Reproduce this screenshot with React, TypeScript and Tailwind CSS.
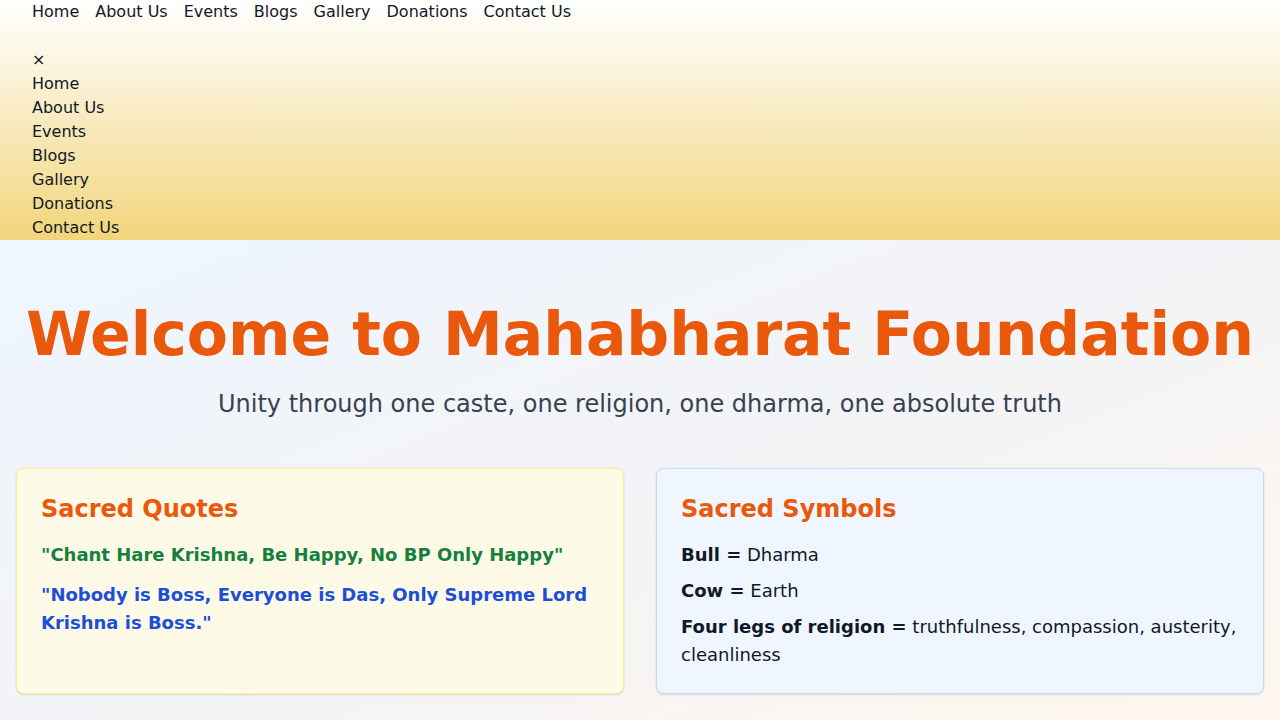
import React from "react";

const links = ["Home", "About Us", "Events", "Blogs", "Gallery", "Donations", "Contact Us"];

export default function App() {
  return (
    <div className="min-h-screen font-['DejaVu_Sans',sans-serif] text-[#111827]">
      {/* Header */}
      <header className="bg-linear-to-b from-white to-[#f2d57a] px-8">
        <nav className="flex gap-4 text-base leading-6">
          {links.map((l) => (
            <a key={l} href="#">
              {l}
            </a>
          ))}
        </nav>
        <div className="h-6" />
        <div className="flex flex-col text-base leading-6">
          <button className="w-fit text-left">×</button>
          {links.map((l) => (
            <a key={l} href="#" className="w-fit">
              {l}
            </a>
          ))}
        </div>
      </header>

      {/* Hero */}
      <main className="bg-linear-to-br from-[#eff6ff] via-[#f3f4f6] to-[#fff7ed] px-4 pt-16 pb-16">
        <h1 className="mb-6 text-center text-6xl leading-none font-bold text-[#ea580c]">
          Welcome to Mahabharat Foundation
        </h1>
        <p className="mb-12 text-center text-2xl leading-8 text-[#374151]">
          Unity through one caste, one religion, one dharma, one absolute truth
        </p>

        <div className="grid grid-cols-2 gap-8">
          <div className="rounded-lg border border-[#fef08a] bg-[#fefae8] p-6 shadow-sm">
            <h2 className="mb-4 text-2xl leading-8 font-bold text-[#ea580c]">Sacred Quotes</h2>
            <div className="space-y-3 text-lg leading-7 font-bold">
              <p className="text-[#15803d]">"Chant Hare Krishna, Be Happy, No BP Only Happy"</p>
              <p className="text-[#1d4ed8]">
                "Nobody is Boss, Everyone is Das, Only Supreme Lord Krishna is Boss."
              </p>
            </div>
          </div>

          <div className="rounded-lg border border-[#bfdbfe] bg-[#eff6ff] p-6 shadow-sm">
            <h2 className="mb-4 text-2xl leading-8 font-bold text-[#ea580c]">Sacred Symbols</h2>
            <div className="space-y-2 text-lg leading-7">
              <p>
                <span className="font-bold">Bull =</span> Dharma
              </p>
              <p>
                <span className="font-bold">Cow =</span> Earth
              </p>
              <p>
                <span className="font-bold">Four legs of religion =</span> truthfulness, compassion,
                austerity, cleanliness
              </p>
            </div>
          </div>
        </div>
      </main>
    </div>
  );
}
